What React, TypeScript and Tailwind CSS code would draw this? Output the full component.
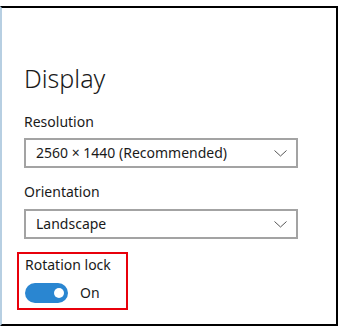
import React from "react";

const font = { fontFamily: '"Noto Sans", "Open Sans", sans-serif' };

function Chevron() {
  return (
    <svg width="13" height="7" viewBox="0 0 13 7" className="shrink-0">
      <path d="M0.5 0.5 L6.5 6 L12.5 0.5" fill="none" stroke="#555" strokeWidth="1" />
    </svg>
  );
}

function Select({ value }: { value: string }) {
  return (
    <div className="flex h-[30px] w-[274px] items-center justify-between border-2 border-[#a3a3a3] bg-white pl-[10px] pr-[9px]">
      <span className="text-[14px] leading-none text-[#1a1a1a]">{value}</span>
      <Chevron />
    </div>
  );
}

export default function App() {
  return (
    <div className="relative h-[331px] w-[342px] overflow-hidden bg-white" style={font}>
      <div className="mt-[6px] h-[320px] w-[338px] border-y-2 border-r-2 border-l-2 border-y-black border-r-black border-l-[#b7cfe2]">
        <div className="flex flex-col pl-[22px] pt-[58px]">
          <h1 className="text-[25px] font-light leading-none text-[#1a1a1a]">Display</h1>
          <div className="mt-[24px] text-[14px] leading-none text-[#1a1a1a]">Resolution</div>
          <div className="mt-[9px]">
            <Select value="2560 × 1440 (Recommended)" />
          </div>
          <div className="mt-[17px] text-[14px] leading-none text-[#1a1a1a]">Orientation</div>
          <div className="mt-[10px]">
            <Select value="Landscape" />
          </div>
          <div className="-ml-[7px] mt-[13px] flex h-[58px] w-[111px] flex-col border-2 border-[#e8000b] pl-[6px] pt-[4px]">
            <div className="text-[14px] leading-none text-[#1a1a1a]">Rotation lock</div>
            <div className="mt-[11px] flex items-center gap-[12px]">
              <div className="flex h-[20px] w-[43px] items-center justify-end rounded-full bg-[#2a86d1] pr-[4px]">
                <div className="h-[10px] w-[10px] rounded-full bg-white" />
              </div>
              <span className="text-[14px] leading-none text-[#1a1a1a]">On</span>
            </div>
          </div>
        </div>
      </div>
    </div>
  );
}
